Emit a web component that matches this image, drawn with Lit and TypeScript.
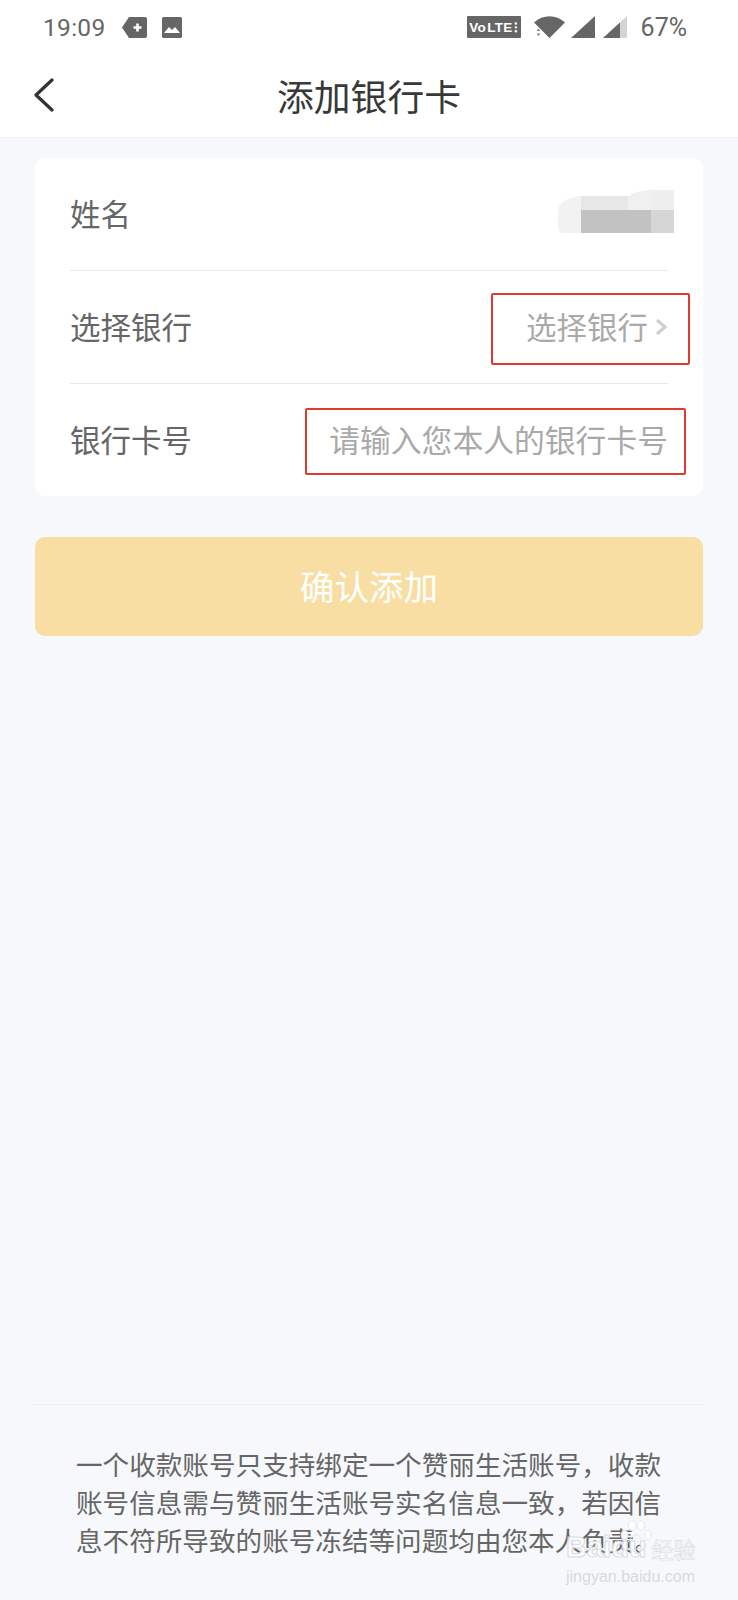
import { LitElement, html, css, svg } from "lit";
import { customElement } from "lit/decorators.js";

const paw = svg`<svg class="paw" width="32" height="34" viewBox="0 0 32 34" fill="#fff" stroke="#e2e4e8" stroke-width="1">
  <ellipse cx="4.500" cy="15" rx="3.500" ry="5"/><ellipse cx="12" cy="5.500" rx="3.600" ry="5"/><ellipse cx="21" cy="5.500" rx="3.600" ry="5"/><ellipse cx="28" cy="15" rx="3.500" ry="5"/>
  <path d="M16 15c-4 0-5 4-8 7-3 4-1 8 4 8 2 0 2-1 4-1s2 1 4 1c5 0 7-4 4-8-3-3-4-7-8-7z" fill="none"/></svg>`;

@customElement("app-root")
export class AppRoot extends LitElement {
  static styles = css`
    :host { display: block; width: 738px; height: 1600px; position: relative; overflow: hidden;
      background: #f6f8fb; font-family: "Noto Sans CJK SC", "Noto Sans", sans-serif; }
    .page { display: flex; flex-direction: column; height: 100%; }
    .top { background: #fff; height: 137px; border-bottom: 1px solid #f1f2f4; flex: none; }
    .status { height: 54px; display: flex; align-items: center; padding: 0 51px 0 43px; color: #666;
      font-family: Roboto, sans-serif; font-size: 24.500px; }
    .status .time { margin-right: 16px; letter-spacing: .3px; }
    .status .gap { flex: 1; }
    .status svg { display: block; flex: none; }
    .s1 { margin-right: 15px; }
    .volte { width: 54px; height: 22px; background: #666; color: #fff; font: 700 13.500px "Liberation Sans", sans-serif;
      display: flex; align-items: center; justify-content: center; letter-spacing: .2px; margin-right: 12px; border-radius: 1px; }
    .sig1 { margin-left: 5px; }
    .sig2 { margin-left: 8px; }
    .pct { margin-left: 14px; font-size: 25px; }
    .nav { height: 83px; position: relative; display: flex; align-items: center; justify-content: center; }
    .nav .title { font-size: 36.800px; color: #383838; line-height: 1; }
    .back { position: absolute; left: 33px; top: 24px; }
    .card { margin: 20px 35px 0; background: #fff; border-radius: 10px; padding: 0 35px; height: 338px; box-sizing: border-box; position: relative; flex: none; }
    .row { height: 113px; display: flex; align-items: center; justify-content: space-between; border-bottom: 1px solid #e6e6e6; box-sizing: border-box; font-size: 30.500px; color: #666; padding-bottom: 3px; }
    .row:last-child { border-bottom: 0; height: 112px; }
    .row .value { color: #a9a9a9; font-size: 30.500px; display: flex; align-items: center; }
    .row .value.input { font-size: 30.800px; }
    .row.bank .value { gap: 7px; }
    .chev { margin-top: 2px; }
    .blur { margin-right: -6px; margin-top: -3px; display: block; }
    .mark { position: absolute; border: 2px solid #e03a30; border-radius: 2px; box-sizing: border-box; }
    .mark.m1 { left: 456px; top: 135px; width: 199px; height: 72px; }
    .mark.m2 { left: 270px; top: 250px; width: 381px; height: 67px; }
    .btn { margin: 41px 35px 0; height: 99px; background: #f8dea2; border-radius: 10px; color: #fff; font-size: 34.500px;
      display: flex; align-items: center; justify-content: center; flex: none; padding-bottom: 3px; box-sizing: border-box; }
    .footer { margin-top: auto; margin-left: 30px; margin-right: 33px; border-top: 1px solid #eef0f3; height: 196px; box-sizing: border-box;
      padding: 40px 38px 0 46px; }
    .footer p { margin: 0; font-size: 26.600px; line-height: 38px; color: #666; }
    .wm { position: absolute; left: 566px; top: 1520px; width: 136px; pointer-events: none; line-height: 1; }
    .wm .l1 { position: relative; display: flex; align-items: flex-end; height: 44px; white-space: nowrap; opacity: .9; }
    .wm .baidu { font: 700 29px "Liberation Sans", sans-serif; color: #fff; -webkit-text-stroke: 1px #d6d8dc; }
    .wm .paw { position: absolute; left: 54px; top: 0; }
    .wm .cn { font: 400 22px "Noto Sans CJK SC", sans-serif; color: #fff; -webkit-text-stroke: .6px #d4d6da; margin-left: 5px; }
    .wm .l2 { font: 400 16px "Liberation Sans", sans-serif; color: #d8dade; margin-top: 4px; white-space: nowrap; }
  `;

  render() {
    return html`
      <div class="page">
        <div class="top">
          <div class="status">
            <span class="time">19:09</span>
            <svg class="s1" width="25" height="21" viewBox="0 0 25 21"><path d="M7 0h16a2 2 0 0 1 2 2v17a2 2 0 0 1-2 2H7L0 10.500z" fill="#666"/><path d="M11.500 10.500h8M15.500 6.500v8" stroke="#fff" stroke-width="2.600"/></svg>
            <svg width="20" height="21" viewBox="0 0 20 21"><rect width="20" height="21" rx="1.500" fill="#666"/><path d="M2 16l5-6 3 3 3-3 5 6z" fill="#fff"/></svg>
            <span class="gap"></span>
            <span class="volte">Vo&#8202;LTE&#8202;⁝</span>
            <svg width="33" height="24" viewBox="0 0 33 24"><path d="M1 7.500C10-1 23-1 32 7.500L16.500 23z" fill="#666"/><path d="M3.500 16l2-2.500 2 2.500zM3.500 18.500l2 2.500 2-2.500z" fill="#888"/></svg>
            <svg class="sig1" width="24" height="24" viewBox="0 0 24 24"><path d="M24 1v22H0z" fill="#666"/></svg>
            <svg class="sig2" width="24" height="24" viewBox="0 0 24 24"><path d="M24 1v22H0z" fill="#d4d4d4"/><path d="M17 7.500V23H0z" fill="#666"/></svg>
            <span class="pct">67%</span>
          </div>
          <div class="nav">
            <svg class="back" width="22" height="34" viewBox="0 0 22 34" fill="none"><path d="M19 2L3 17l16 15" stroke="#333" stroke-width="3.200" stroke-linecap="round" stroke-linejoin="round"/></svg>
            <span class="title">添加银行卡</span>
          </div>
        </div>

        <div class="card">
          <div class="rows">
            <div class="row">
              <span>姓名</span>
              <svg class="blur" width="116" height="43" viewBox="0 0 116 43">
                <path d="M0 20Q2 8 23 6V43H4Q0 43 0 34z" fill="#f2f2f2"/>
                <rect x="23" y="6" width="70" height="14" fill="#e7e7e7"/>
                <path d="M70 6Q80 0 93 0V20H70z" fill="#f0f0f0"/>
                <rect x="93" y="0" width="23" height="20" fill="#eeeeee"/>
                <rect x="23" y="20" width="70" height="23" fill="#c2c2c2"/>
                <rect x="93" y="20" width="23" height="23" fill="#d6d6d6"/>
              </svg>
            </div>
            <div class="row bank">
              <span>选择银行</span>
              <span class="value">选择银行
                <svg class="chev" width="13" height="18" viewBox="0 0 13 18" fill="none"><path d="M2 2l8 7-8 7" stroke="#cfcfcf" stroke-width="3.200"/></svg>
              </span>
            </div>
            <div class="row">
              <span>银行卡号</span>
              <span class="value input">请输入您本人的银行卡号</span>
            </div>
          </div>
          <div class="mark m1"></div>
          <div class="mark m2"></div>
        </div>

        <div class="btn">确认添加</div>

        <div class="footer">
          <p>一个收款账号只支持绑定一个赞丽生活账号，收款账号信息需与赞丽生活账号实名信息一致，若因信息不符所导致的账号冻结等问题均由您本人负责。</p>
        </div>
      </div>
      <div class="wm">
        <div class="l1">${paw}<span class="baidu">Baidu</span><span class="cn">经验</span></div>
        <div class="l2">jingyan.baidu.com</div>
      </div>
    `;
  }
}
